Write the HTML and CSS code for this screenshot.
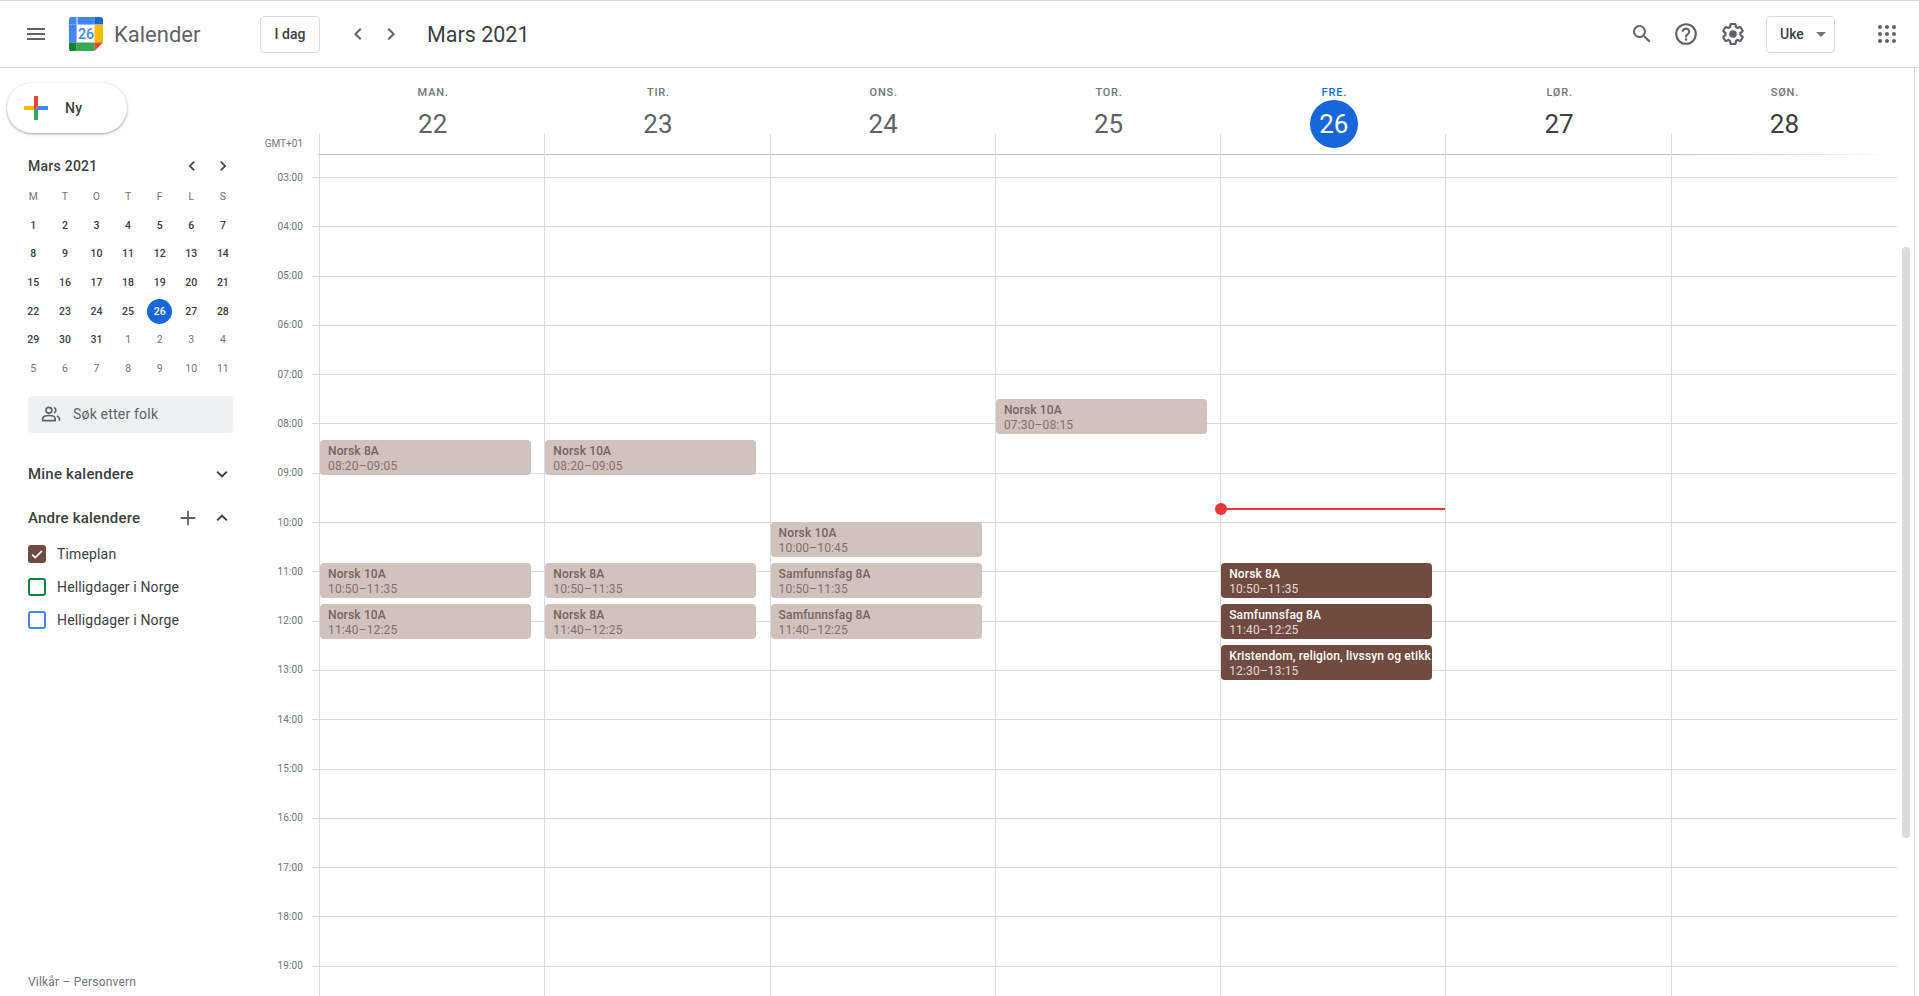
FILE: index.html
```html
<!DOCTYPE html>
<html lang="no">
<head>
  <meta charset="UTF-8">
  <title>Kalender</title>
  <link rel="stylesheet" href="styles.css">
</head>
<body>
  <div class="app">
    <header class="topbar">
      <div class="menu-icon">
        <svg width="24" height="24" viewBox="0 0 24 24"><path d="M3 18h18v-2H3v2zm0-5h18v-2H3v2zm0-7v2h18V6H3z" fill="#5f6368"/></svg>
      </div>
      <svg class="logo" width="34" height="34" viewBox="0 0 36 36">
        <rect x="8" y="7" width="20" height="21" fill="#fff"/>
        <path d="M27 8H9V0h18z" fill="#4285f4"/>
        <path d="M8 8H0V3a3 3 0 0 1 3-3h5z" fill="#4285f4"/>
        <path d="M8 27H0V8h8z" fill="#4285f4"/>
        <path d="M27 0h6a3 3 0 0 1 3 3v5h-9z" fill="#1967d2"/>
        <path d="M27 8h9v19h-9z" fill="#fbbc04"/>
        <path d="M8 27h19v9H8z" fill="#34a853"/>
        <path d="M0 27h8v9H3a3 3 0 0 1-3-3z" fill="#188038"/>
        <path d="M27 27h9l-9 9z" fill="#ea4335"/>
        <text x="18" y="23" class="logo-num">26</text>
      </svg>
      <span class="brand">Kalender</span>
      <button class="btn today-btn">I dag</button>
      <div class="nav-arrows">
        <svg width="24" height="24" viewBox="0 0 24 24"><path d="M15.4 7.4 14 6l-6 6 6 6 1.4-1.4L10.8 12z" fill="#5f6368"/></svg>
        <svg width="24" height="24" viewBox="0 0 24 24"><path d="M10 6 8.6 7.4l4.6 4.6-4.6 4.6L10 18l6-6z" fill="#5f6368"/></svg>
      </div>
      <span class="current-month">Mars 2021</span>
      <div class="top-actions">
        <svg class="search-icon" width="24" height="24" viewBox="0 0 24 24"><path d="M15.5 14h-.79l-.28-.27A6.47 6.47 0 0 0 16 9.5 6.5 6.5 0 1 0 9.5 16c1.61 0 3.09-.59 4.23-1.57l.27.28v.79l5 4.99L20.49 19l-4.99-5zm-6 0C7.01 14 5 11.99 5 9.5S7.01 5 9.5 5 14 7.01 14 9.5 11.99 14 9.5 14z" fill="#5f6368"/></svg>
        <svg width="26" height="26" viewBox="0 0 24 24"><path d="M11 18h2v-2h-2v2zm1-16a10 10 0 1 0 0 20 10 10 0 0 0 0-20zm0 18a8 8 0 1 1 0-16 8 8 0 0 1 0 16zm0-14a4 4 0 0 0-4 4h2a2 2 0 1 1 4 0c0 2-3 1.75-3 5h2c0-2.25 3-2.5 3-5a4 4 0 0 0-4-4z" fill="#5f6368"/></svg>
        <svg width="26" height="26" viewBox="0 0 24 24"><path d="M13.85 22.25h-3.7c-.74 0-1.36-.54-1.45-1.27l-.27-1.89c-.27-.14-.53-.29-.79-.46l-1.8.72c-.7.26-1.47-.03-1.81-.65L2.2 15.53c-.35-.66-.2-1.44.36-1.88l1.53-1.19c-.01-.15-.02-.3-.02-.46 0-.15.01-.31.02-.46l-1.52-1.19c-.59-.45-.74-1.26-.37-1.88l1.85-3.19c.34-.62 1.11-.9 1.79-.63l1.81.73c.26-.17.52-.32.78-.46l.27-1.91c.09-.7.71-1.25 1.44-1.25h3.7c.74 0 1.36.54 1.45 1.27l.27 1.89c.27.14.53.29.79.46l1.8-.72c.71-.26 1.48.03 1.82.65l1.84 3.18c.36.66.2 1.44-.36 1.88l-1.52 1.19c.01.15.02.3.02.46s-.01.31-.02.46l1.52 1.19c.56.45.72 1.23.37 1.86l-1.86 3.22c-.34.62-1.11.9-1.8.63l-1.8-.72c-.26.17-.52.32-.78.46l-.27 1.91c-.1.68-.72 1.22-1.46 1.22zm-3.23-2h2.76l.37-2.55.53-.22c.44-.18.88-.44 1.34-.78l.45-.34 2.38.96 1.38-2.4-2.03-1.58.07-.56c.03-.26.06-.51.06-.78s-.03-.53-.06-.78l-.07-.56 2.03-1.58-1.39-2.4-2.39.96-.45-.35c-.42-.32-.87-.58-1.33-.77l-.52-.22-.37-2.55h-2.76l-.37 2.55-.53.21c-.44.19-.88.44-1.34.79l-.45.33-2.38-.95-1.39 2.39 2.03 1.58-.07.56a7 7 0 0 0-.06.79c0 .26.02.53.06.78l.07.56-2.03 1.58 1.38 2.4 2.39-.96.45.35c.43.33.86.58 1.33.77l.53.22.38 2.55z" fill="#5f6368"/><circle cx="12" cy="12" r="3.5" fill="#5f6368"/></svg>
      </div>
      <button class="btn view-btn">Uke<span class="caret"></span></button>
      <svg class="apps-icon" width="24" height="24" viewBox="0 0 24 24" fill="#5f6368">
        <circle cx="5" cy="5" r="2"/><circle cx="12" cy="5" r="2"/><circle cx="19" cy="5" r="2"/>
        <circle cx="5" cy="12" r="2"/><circle cx="12" cy="12" r="2"/><circle cx="19" cy="12" r="2"/>
        <circle cx="5" cy="19" r="2"/><circle cx="12" cy="19" r="2"/><circle cx="19" cy="19" r="2"/>
      </svg>
    </header>

    <div class="main">
      <aside class="sidebar">
        <button class="create-btn">
          <svg width="36" height="36" viewBox="0 0 36 36">
            <path fill="#34a853" d="M16 16v14h4V20z"/>
            <path fill="#4285f4" d="M30 16H20l-4 4h14z"/>
            <path fill="#fbbc05" d="M6 16v4h10l4-4z"/>
            <path fill="#ea4335" d="M20 16V6h-4v14z"/>
          </svg>
          Ny
        </button>

        <div class="mini-head">
          <span>Mars 2021</span>
          <svg width="20" height="20" viewBox="0 0 24 24"><path d="M15.4 7.4 14 6l-6 6 6 6 1.4-1.4L10.8 12z" fill="#3c4043"/></svg>
          <svg width="20" height="20" viewBox="0 0 24 24"><path d="M10 6 8.6 7.4l4.6 4.6-4.6 4.6L10 18l6-6z" fill="#3c4043"/></svg>
        </div>
        <div class="mini-cal">
          <span class="wd">M</span><span class="wd">T</span><span class="wd">O</span><span class="wd">T</span><span class="wd">F</span><span class="wd">L</span><span class="wd">S</span>
          <span>1</span><span>2</span><span>3</span><span>4</span><span>5</span><span>6</span><span>7</span>
          <span>8</span><span>9</span><span>10</span><span>11</span><span>12</span><span>13</span><span>14</span>
          <span>15</span><span>16</span><span>17</span><span>18</span><span>19</span><span>20</span><span>21</span>
          <span>22</span><span>23</span><span>24</span><span>25</span><span class="cur">26</span><span>27</span><span>28</span>
          <span>29</span><span>30</span><span>31</span><span class="off">1</span><span class="off">2</span><span class="off">3</span><span class="off">4</span>
          <span class="off">5</span><span class="off">6</span><span class="off">7</span><span class="off">8</span><span class="off">9</span><span class="off">10</span><span class="off">11</span>
        </div>

        <div class="people-search">
          <svg width="20" height="20" viewBox="0 0 24 24" fill="none" stroke="#5f6368" stroke-width="2">
            <circle cx="9.5" cy="7.5" r="3.5"/>
            <path d="M2 20v-2.5c0-2.2 3.5-3.7 7.5-3.7s7.5 1.5 7.5 3.7V20z"/>
            <path d="M15.5 4.2a3.5 3.5 0 0 1 0 6.6M19 14.5c1.8.7 3 1.7 3 3V20"/>
          </svg>
          Søk etter folk
        </div>

        <div class="cal-head mine">
          <span>Mine kalendere</span>
          <svg width="22" height="22" viewBox="0 0 24 24"><path d="M16.6 8.6 12 13.2 7.4 8.6 6 10l6 6 6-6z" fill="#3c4043"/></svg>
        </div>
        <div class="cal-head others">
          <span>Andre kalendere</span>
          <svg width="22" height="22" viewBox="0 0 24 24"><path d="M20 13h-7v7h-2v-7H4v-2h7V4h2v7h7z" fill="#5f6368"/></svg>
          <svg width="22" height="22" viewBox="0 0 24 24"><path d="M12 8l-6 6 1.4 1.4L12 10.8l4.6 4.6L18 14z" fill="#3c4043"/></svg>
        </div>
        <ul class="cal-list">
          <li><span class="check brown"><svg width="14" height="14" viewBox="0 0 24 24"><path d="M9 16.2 4.8 12l-2 2L9 20.2 21.5 7.7l-2-2z" fill="#fff"/></svg></span>Timeplan</li>
          <li><span class="check green"></span>Helligdager i Norge</li>
          <li><span class="check blue"></span>Helligdager i Norge</li>
        </ul>

        <div class="terms">Vilkår – Personvern</div>
      </aside>

      <section class="week">
        <div class="week-head">
          <div class="gmt">GMT+01</div>
          <div class="day-head past"><div class="day-name">MAN.</div><div class="day-num">22</div></div>
          <div class="day-head past"><div class="day-name">TIR.</div><div class="day-num">23</div></div>
          <div class="day-head past"><div class="day-name">ONS.</div><div class="day-num">24</div></div>
          <div class="day-head past"><div class="day-name">TOR.</div><div class="day-num">25</div></div>
          <div class="day-head today"><div class="day-name">FRE.</div><div class="day-num">26</div></div>
          <div class="day-head"><div class="day-name">LØR.</div><div class="day-num">27</div></div>
          <div class="day-head"><div class="day-name">SØN.</div><div class="day-num">28</div></div>
        </div>

        <div class="grid-wrap">
          <div class="hours">
            <div class="hour first"></div>
            <div class="hour"><span>03:00</span></div>
            <div class="hour"><span>04:00</span></div>
            <div class="hour"><span>05:00</span></div>
            <div class="hour"><span>06:00</span></div>
            <div class="hour"><span>07:00</span></div>
            <div class="hour"><span>08:00</span></div>
            <div class="hour"><span>09:00</span></div>
            <div class="hour"><span>10:00</span></div>
            <div class="hour"><span>11:00</span></div>
            <div class="hour"><span>12:00</span></div>
            <div class="hour"><span>13:00</span></div>
            <div class="hour"><span>14:00</span></div>
            <div class="hour"><span>15:00</span></div>
            <div class="hour"><span>16:00</span></div>
            <div class="hour"><span>17:00</span></div>
            <div class="hour"><span>18:00</span></div>
            <div class="hour"><span>19:00</span></div>
          </div>

          <div class="days">
            <div class="day">
              <div class="event" style="top:284.7px"><b>Norsk 8A</b>08:20–09:05</div>
              <div class="event" style="top:407.8px"><b>Norsk 10A</b>10:50–11:35</div>
              <div class="event" style="top:448.8px"><b>Norsk 10A</b>11:40–12:25</div>
            </div>
            <div class="day">
              <div class="event" style="top:284.7px"><b>Norsk 10A</b>08:20–09:05</div>
              <div class="event" style="top:407.8px"><b>Norsk 8A</b>10:50–11:35</div>
              <div class="event" style="top:448.8px"><b>Norsk 8A</b>11:40–12:25</div>
            </div>
            <div class="day">
              <div class="event" style="top:366.8px"><b>Norsk 10A</b>10:00–10:45</div>
              <div class="event" style="top:407.8px"><b>Samfunnsfag 8A</b>10:50–11:35</div>
              <div class="event" style="top:448.8px"><b>Samfunnsfag 8A</b>11:40–12:25</div>
            </div>
            <div class="day">
              <div class="event" style="top:243.6px"><b>Norsk 10A</b>07:30–08:15</div>
            </div>
            <div class="day">
              <div class="now-line" style="top:352.5px"></div>
              <div class="event dark" style="top:407.8px"><b>Norsk 8A</b>10:50–11:35</div>
              <div class="event dark" style="top:448.8px"><b>Samfunnsfag 8A</b>11:40–12:25</div>
              <div class="event dark" style="top:489.9px"><b>Kristendom, religion, livssyn og etikk</b>12:30–13:15</div>
            </div>
            <div class="day"></div>
            <div class="day"></div>
          </div>

          <div class="scrollbar"><div class="thumb"></div></div>
        </div>
      </section>
    </div>
  </div>
</body>
</html>
```
FILE: styles.css
```css
* {
  box-sizing: border-box;
}
html, body {
  margin: 0;
  padding: 0;
  height: 100%;
  overflow: hidden;
}
body {
  font-family: Roboto, "Liberation Sans", sans-serif;
  color: #3c4043;
  background-color: #fff;
}
.app {
  display: flex;
  flex-direction: column;
  height: 996px;
  overflow: hidden;
}

/* top bar */
.topbar {
  display: flex;
  align-items: center;
  height: 68px;
  flex: none;
  border-top: 1px solid #dadce0;
  border-bottom: 1px solid #dadce0;
  padding-left: 24px;
}
.menu-icon {
  width: 24px;
  height: 24px;
}
.logo {
  margin-left: 21px;
}
.logo-num {
  font-family: Roboto, sans-serif;
  font-size: 15px;
  font-weight: 500;
  fill: #4285f4;
  text-anchor: middle;
}
.brand {
  margin-left: 11px;
  width: 146px;
  font-size: 22px;
  color: #5f6368;
}
.btn {
  font-family: inherit;
  font-size: 14px;
  font-weight: 500;
  color: #3c4043;
  background-color: #fff;
  border: 1px solid #dadce0;
  border-radius: 4px;
  height: 37px;
}
.today-btn {
  width: 60px;
  padding: 0;
}
.nav-arrows {
  display: flex;
  gap: 9px;
  margin-left: 26px;
}
.current-month {
  margin-left: 24px;
  font-size: 21.5px;
}
.top-actions {
  display: flex;
  align-items: center;
  gap: 21px;
  margin-left: auto;
}
.search-icon {
  margin-right: -2px;
}
.view-btn {
  display: flex;
  align-items: center;
  width: 69px;
  margin-left: 20px;
  padding: 0 0 0 13px;
}
.caret {
  width: 0;
  height: 0;
  margin-left: 12px;
  border-left: 5px solid transparent;
  border-right: 5px solid transparent;
  border-top: 5px solid #70757a;
}
.apps-icon {
  margin-left: 40px;
  margin-right: 20px;
}

/* sidebar */
.main {
  display: flex;
  flex: 1;
  min-height: 0;
}
.sidebar {
  position: relative;
  width: 256px;
  flex: none;
  padding: 15px 0 0 28px;
}
.create-btn {
  display: flex;
  align-items: center;
  gap: 11px;
  width: 120px;
  height: 50px;
  margin-left: -21px;
  padding: 0 0 0 11px;
  font-family: inherit;
  font-size: 14px;
  font-weight: 500;
  letter-spacing: 0.2px;
  color: #3c4043;
  background-color: #fff;
  border: none;
  border-radius: 25px;
  box-shadow: 0 1px 2px rgba(60, 64, 67, 0.3), 0 1px 3px 1px rgba(60, 64, 67, 0.15);
}
.mini-head {
  display: flex;
  align-items: center;
  gap: 11px;
  height: 20px;
  margin-top: 23px;
  width: 205px;
  font-size: 14px;
  font-weight: 500;
  letter-spacing: 0.25px;
}
.mini-head span {
  margin-right: auto;
}
.mini-cal {
  display: grid;
  grid-template-columns: repeat(7, 31.6px);
  grid-auto-rows: 28.7px;
  margin: 6px 0 0 -10.5px;
  font-size: 10.5px;
  font-weight: 500;
}
.mini-cal span {
  display: flex;
  align-items: center;
  justify-content: center;
}
.mini-cal .wd,
.mini-cal .off {
  color: #70757a;
  font-weight: 400;
}
.mini-cal .cur {
  width: 25px;
  height: 25px;
  margin: auto;
  color: #fff;
  background-color: #1766dc;
  border-radius: 50%;
}
.people-search {
  display: flex;
  align-items: center;
  gap: 12px;
  width: 205px;
  height: 37px;
  margin-top: 13px;
  padding-left: 13px;
  font-size: 14px;
  letter-spacing: 0.2px;
  color: #5f6368;
  background-color: #eff0f2;
  border-radius: 4px;
}
.cal-head {
  display: flex;
  align-items: center;
  gap: 12px;
  width: 205px;
  height: 24px;
  font-size: 15px;
  font-weight: 500;
  letter-spacing: 0.2px;
}
.cal-head span {
  margin-right: auto;
}
.cal-head.mine {
  margin-top: 29px;
}
.cal-head.others {
  margin-top: 20px;
}
.cal-list {
  list-style: none;
  margin: 8px 0 0;
  padding: 0;
}
.cal-list li {
  display: flex;
  align-items: center;
  height: 33px;
  font-size: 14px;
  letter-spacing: 0.15px;
}
.check {
  display: flex;
  align-items: center;
  justify-content: center;
  width: 18px;
  height: 18px;
  margin-right: 11px;
  border: 2px solid;
  border-radius: 3px;
}
.check.brown {
  background-color: #714b40;
  border-color: #714b40;
}
.check.green {
  border-color: #0b8043;
}
.check.blue {
  border-color: #4285f4;
}
.terms {
  position: absolute;
  left: 28px;
  bottom: 7px;
  font-size: 12px;
  letter-spacing: 0.2px;
  color: #70757a;
}

/* week view */
.week {
  flex: 1;
  min-width: 0;
  display: flex;
  flex-direction: column;
  border-right: 1px solid #dadce0;
  margin-right: 4px;
}
.week-head {
  display: grid;
  grid-template-columns: 64px repeat(7, 225.3px);
  height: 87px;
  flex: none;
  background: linear-gradient(to right, transparent 60px, #b9bbbe 64px, #b9bbbe 1400px, transparent 1640px) bottom / 100% 1px no-repeat;
}
.gmt {
  align-self: end;
  padding: 0 17px 3px 0;
  margin-left: -4px;
  text-align: right;
  font-size: 10px;
  color: #70757a;
  line-height: 17px;
}
.day-head {
  position: relative;
  text-align: center;
  padding-top: 17px;
}
.day-head::after {
  content: "";
  position: absolute;
  left: -1px;
  bottom: 0;
  height: 21px;
  border-left: 1px solid #dadce0;
}
.day-name {
  padding-left: 1px;
  font-size: 11px;
  font-weight: 500;
  letter-spacing: 0.8px;
  color: #70757a;
  line-height: 15px;
}
.day-num {
  width: 48px;
  height: 48px;
  margin: 0 auto;
  font-size: 26px;
  line-height: 48px;
  color: #3c4043;
  border-radius: 50%;
}
.past .day-num {
  color: #5f6368;
}
.today .day-name {
  color: #1766dc;
}
.today .day-num {
  position: relative;
  z-index: 1;
  color: #fff;
  background-color: #1766dc;
}
.grid-wrap {
  position: relative;
  display: flex;
  flex: 1;
  min-height: 0;
  overflow: hidden;
}
.hours {
  position: absolute;
  inset: 0 17px 0 56px;
}
.hour {
  position: relative;
  height: 49.3px;
  border-top: 1px solid #dadce0;
}
.hour.first {
  height: 22px;
  border-top: none;
}
.hour span {
  position: absolute;
  right: 100%;
  top: -7.5px;
  width: 48px;
  padding-right: 9px;
  text-align: right;
  font-size: 10px;
  letter-spacing: 0.1px;
  line-height: 14px;
  color: #70757a;
  white-space: nowrap;
}
.days {
  position: relative;
  display: grid;
  grid-template-columns: repeat(7, 225.3px);
  margin-left: 64px;
  height: 100%;
}
.day {
  position: relative;
  border-left: 1px solid #dadce0;
  margin-left: -1px;
}
.event {
  position: absolute;
  left: 0;
  width: 211.2px;
  height: 35px;
  padding: 4.5px 0 0 8px;
  font-size: 12px;
  letter-spacing: 0.15px;
  line-height: 15px;
  color: #83716c;
  background-color: #d1c2be;
  border-radius: 4px;
  overflow: hidden;
  white-space: nowrap;
}
.event b {
  display: block;
  font-weight: 500;
  color: #75645f;
}
.event.dark {
  color: #e2d8d5;
  background-color: #714b40;
}
.event.dark b {
  color: #fff;
}
.now-line {
  position: absolute;
  left: 0;
  right: 0;
  height: 2px;
  background-color: #ea3535;
}
.now-line::before {
  content: "";
  position: absolute;
  left: -6px;
  top: -5px;
  width: 12px;
  height: 12px;
  background-color: #ea3535;
  border-radius: 50%;
}
.scrollbar {
  position: absolute;
  right: 4px;
  top: 92px;
  width: 8px;
  height: 591px;
}
.thumb {
  height: 100%;
  background-color: #dadce0;
  border-radius: 4px;
}
```
